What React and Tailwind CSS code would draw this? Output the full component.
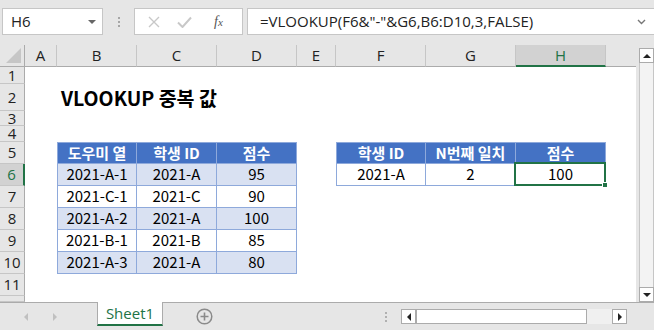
import { Fragment } from "react"

const UI = "font-['Segoe_UI','Open_Sans','Noto_Sans',sans-serif]"
const KR = "font-['Noto_Sans_CJK_KR','Noto_Sans',sans-serif]"

const COLS = ['A', 'B', 'C', 'D', 'E', 'F', 'G', 'H', '']
const ROWS = [1, 2, 3, 4, 5, 6, 7, 8, 9, 10, 11, 12]

// table cells: kind = head | band | plain
const CELLS = {
  B5: ['도우미 열', 'head'], C5: ['학생 ID', 'head'], D5: ['점수', 'head'],
  B6: ['2021-A-1', 'band'], C6: ['2021-A', 'band'], D6: ['95', 'band'],
  B7: ['2021-C-1', 'plain'], C7: ['2021-C', 'plain'], D7: ['90', 'plain'],
  B8: ['2021-A-2', 'band'], C8: ['2021-A', 'band'], D8: ['100', 'band'],
  B9: ['2021-B-1', 'plain'], C9: ['2021-B', 'plain'], D9: ['85', 'plain'],
  B10: ['2021-A-3', 'band'], C10: ['2021-A', 'band'], D10: ['80', 'band'],
  F5: ['학생 ID', 'head'], G5: ['N번째 일치', 'head'], H5: ['점수', 'head'],
  F6: ['2021-A', 'plain'], G6: ['2', 'plain'], H6: ['100', 'plain'],
}

function Cell({ col, row }) {
  const id = col + row
  const cell = CELLS[id]

  if (id === 'B2') {
    return (
      <div className="relative bg-white">
        <span className={`absolute left-[4px] top-0 h-full flex items-center whitespace-nowrap text-[19.5px] font-bold text-black ${KR}`}>
          VLOOKUP 중복 값
        </span>
      </div>
    )
  }

  if (!cell) return <div className="bg-white" />

  const [text, kind] = cell
  const firstCol = col === 'B' || col === 'F'
  const firstRow = row === 5
  const bg = kind === 'head' ? 'bg-[#4472c4] text-white font-bold' : kind === 'band' ? 'bg-[#d9e1f2] text-black' : 'bg-white text-black'

  return (
    <div className={`relative flex items-center justify-center border-r border-b border-[#8ea9db] text-[15px] ${KR} ${bg} ${firstCol ? 'border-l' : ''} ${firstRow ? 'border-t' : ''}`}>
      {text}
      {id === 'H6' && (
        <>
          <div className="absolute -left-[2px] -top-[2px] -right-[1px] -bottom-[1px] border-2 border-[#217346]" />
          <div className="absolute -right-[3px] -bottom-[3px] w-[6px] h-[6px] bg-[#217346] border border-white" />
        </>
      )}
    </div>
  )
}

function TopBar() {
  return (
    <div className={`h-[45px] flex items-start pt-[8px] bg-[#e6e6e6] ${UI}`}>
      <div className="ml-[2px] w-[101px] h-[27px] bg-white border border-[#c6c6c6] flex items-center pl-[8px] pr-[6px] text-[15px] text-[#222]">
        H6
        <span className="ml-auto w-0 h-0 border-l-[4px] border-r-[4px] border-t-[4px] border-l-transparent border-r-transparent border-t-[#666]" />
      </div>
      <div className="w-[31px] h-[27px] flex flex-col items-center justify-center gap-[2px]">
        <span className="w-[2px] h-[2px] bg-[#a6a6a6]" />
        <span className="w-[2px] h-[2px] bg-[#a6a6a6]" />
        <span className="w-[2px] h-[2px] bg-[#a6a6a6]" />
      </div>
      <div className="w-[109px] h-[27px] bg-white border border-[#c6c6c6] flex items-center">
        <svg width="12" height="12" viewBox="0 0 12 12" className="ml-[13px]">
          <path d="M1 1 L11 11 M11 1 L1 11" stroke="#c8c8c8" strokeWidth="1.4" />
        </svg>
        <svg width="15" height="12" viewBox="0 0 15 12" className="ml-[17px]">
          <path d="M1 6.5 L5.5 11 L14 1.5" stroke="#c8c8c8" strokeWidth="2" fill="none" />
        </svg>
        <span className="ml-[22px] text-[14px] italic text-[#555] font-['Liberation_Serif',serif]">
          f<span className="text-[11px]">x</span>
        </span>
      </div>
      <div className="ml-[4px] flex-1 h-[27px] bg-white border border-[#c6c6c6] border-r-0 flex items-center pl-[12px] pr-[8px] text-[15px] text-[#222]">
        =VLOOKUP(F6&amp;"-"&amp;G6,B6:D10,3,FALSE)
        <svg width="9" height="6" viewBox="0 0 9 6" className="ml-auto">
          <path d="M1 1 L4.5 4.5 L8 1" stroke="#777" strokeWidth="1.4" fill="none" />
        </svg>
      </div>
    </div>
  )
}

function Sheet() {
  return (
    <div className="w-[636px] grid grid-cols-[25px_32px_80px_80px_80px_39px_90px_90px_90px_30px] grid-rows-[22px_17px_27px_15px_16px_22px_22px_22px_22px_22px_22px_22px_6px] border-r border-[#ababab]">
      <div className="relative bg-[#e6e6e6] border-r border-b border-[#ababab]">
        <svg width="15" height="15" viewBox="0 0 15 15" className="absolute right-[3px] bottom-[3px]">
          <path d="M15 0 L15 15 L0 15 Z" fill="#c6c6c6" />
        </svg>
      </div>
      {COLS.map((c, i) => (
        <div
          key={'h' + i}
          className={`flex items-center justify-center text-[15px] ${UI} ${c === 'H' ? 'bg-[#d2d2d2] text-[#217346] border-b-2 border-b-[#217346]' : 'bg-[#e6e6e6] text-[#222] border-b border-b-[#ababab]'} ${c ? 'border-r border-r-[#c6c6c6]' : ''}`}
        >
          {c}
        </div>
      ))}
      {ROWS.map(r => (
        <Fragment key={r}>
          <div className={`overflow-hidden flex items-center justify-center text-[15px] leading-none ${UI} border-b border-b-[#c6c6c6] ${r === 6 ? 'bg-[#d2d2d2] text-[#217346] border-r-2 border-r-[#217346]' : 'bg-[#e6e6e6] text-[#222] border-r border-r-[#ababab]'}`}>
            {r < 12 ? r : ''}
          </div>
          {COLS.map((c, i) => (c ? <Cell key={c} col={c} row={r} /> : <div key={'e' + i} className="bg-white" />))}
        </Fragment>
      ))}
    </div>
  )
}

function VScroll() {
  return (
    <div className="w-[18px] bg-[#e6e6e6] pt-[3px] pl-[3px] flex flex-col">
      <div className="w-[15px] h-[15px] bg-white border border-[#ababab] flex items-center justify-center">
        <span className="w-0 h-0 border-l-[4px] border-r-[4px] border-b-[4px] border-l-transparent border-r-transparent border-b-[#222]" />
      </div>
      <div className="w-[15px] flex-1 bg-[#f3f3f3] border-x border-[#c6c6c6]" />
      <div className="w-[15px] h-[15px] bg-white border border-[#ababab] flex items-center justify-center">
        <span className="w-0 h-0 border-l-[4px] border-r-[4px] border-t-[4px] border-l-transparent border-r-transparent border-t-[#222]" />
      </div>
    </div>
  )
}

function TabBar() {
  return (
    <div className={`h-[28px] bg-[#e6e6e6] border-t border-[#ababab] flex items-start ${UI}`}>
      <div className="w-[97px] h-full flex items-center">
        <span className="ml-[24px] w-0 h-0 border-t-[4px] border-b-[4px] border-r-[4px] border-t-transparent border-b-transparent border-r-[#c0c0c0]" />
        <span className="ml-[25px] w-0 h-0 border-t-[4px] border-b-[4px] border-l-[4px] border-t-transparent border-b-transparent border-l-[#c0c0c0]" />
      </div>
      <div className="-mt-px w-[66px] h-[24px] bg-white border-x border-[#ababab] border-b-2 border-b-[#217346] flex items-center justify-center text-[15px] text-[#217346]">
        Sheet1
      </div>
      <div className="ml-[33px] h-full flex items-center">
        <svg width="17" height="17" viewBox="0 0 17 17">
          <circle cx="8.5" cy="8.5" r="7.3" fill="none" stroke="#8a8a8a" strokeWidth="1.5" />
          <path d="M8.5 4.5 V12.5 M4.5 8.5 H12.5" stroke="#8a8a8a" strokeWidth="1.6" />
        </svg>
      </div>
      <div className="ml-[172px] h-full flex flex-col items-center justify-center gap-[2px]">
        <span className="w-[2px] h-[2px] bg-[#b0b0b0]" />
        <span className="w-[2px] h-[2px] bg-[#b0b0b0]" />
        <span className="w-[2px] h-[2px] bg-[#b0b0b0]" />
      </div>
      <div className="ml-[14px] mt-[6px] w-[226px] h-[15px] flex">
        <div className="w-[15px] h-full bg-white border border-[#ababab] flex items-center justify-center">
          <span className="w-0 h-0 border-t-[4px] border-b-[4px] border-r-[4px] border-t-transparent border-b-transparent border-r-[#222]" />
        </div>
        <div className="w-[171px] h-full bg-white border border-[#ababab]" />
        <div className="flex-1 h-full bg-[#f0f0f0]" />
        <div className="w-[15px] h-full bg-white border border-[#ababab] flex items-center justify-center">
          <span className="w-0 h-0 border-t-[4px] border-b-[4px] border-l-[4px] border-t-transparent border-b-transparent border-l-[#222]" />
        </div>
      </div>
    </div>
  )
}

export default function App() {
  return (
    <div className="w-[654px] h-[330px] overflow-hidden bg-[#e6e6e6]">
      <TopBar />
      <div className="flex">
        <Sheet />
        <VScroll />
      </div>
      <TabBar />
    </div>
  )
}
